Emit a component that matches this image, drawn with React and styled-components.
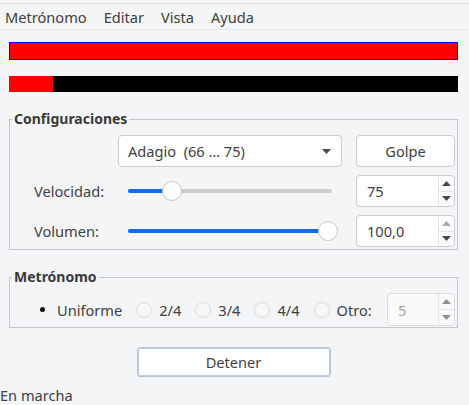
import React from "react";
import styled, { createGlobalStyle } from "styled-components";

const Global = createGlobalStyle`
  html, body { margin: 0; padding: 0; background: #f4f5f7; }
  body {
    font-family: "Noto Sans", "Open Sans", "DejaVu Sans", sans-serif;
    font-size: 14.6px;
    color: #3f3f3f;
  }
  * { box-sizing: border-box; }
`;

const Window = styled.div`
  width: 469px;
  height: 405px;
  overflow: hidden;
  display: flex;
  flex-direction: column;
  background: #f4f5f7;
`;

const MenuBar = styled.div`
  margin-top: 3px;
  height: 27px;
  border-top: 1px solid #dcdcdc;
  border-bottom: 1px solid #e9eaec;
  display: flex;
  align-items: center;
  gap: 17px;
  padding-left: 5px;
`;

const MenuItem = styled.span`
  line-height: 18px;
  color: #404040;
`;

const Content = styled.div`
  padding: 12px 11px 0 9px;
  display: flex;
  flex-direction: column;
`;

const TopBar = styled.div`
  height: 18px;
  background: #ff0000;
  border: 1px solid #0000ff;
`;

const LevelBar = styled.div`
  margin-top: 16px;
  height: 16px;
  background: #000;
  display: flex;
`;

const LevelFill = styled.div`
  background: #ff0000;
  height: 100%;
`;

const Group = styled.fieldset`
  margin: ${(p) => p.$top}px 0 0 0;
  padding: 0;
  border: 1px solid #c4c7cd;
  min-width: 0;
`;

const Legend = styled.legend`
  margin-left: 2px;
  padding: 0 2px;
  font-weight: bold;
  font-size: 14px;
  line-height: 18px;
  color: #3a3a3a;
`;

const ConfigGrid = styled.div`
  display: grid;
  grid-template-columns: 70px 224px 99px;
  column-gap: 14px;
  row-gap: 8px;
  padding: 7px 2px 2px 24px;
  align-items: center;
`;

const Label = styled.span`
  grid-column: 1;
  color: #404040;
  white-space: nowrap;
`;

const Combo = styled.div`
  grid-column: 2;
  height: 32px;
  background: #fff;
  border: 1px solid #c9ccd1;
  border-radius: 4px;
  display: flex;
  align-items: center;
  justify-content: space-between;
  padding: 0 10px 0 9px;
  white-space: pre;
  color: #3f3f3f;
`;

const PushButton = styled.div`
  height: 32px;
  background: #fff;
  border: 1px solid #c9ccd1;
  border-radius: 4px;
  display: flex;
  align-items: center;
  justify-content: center;
  color: #3f3f3f;
`;

const SliderBox = styled.div`
  position: relative;
  height: 32px;
`;

const Groove = styled.div`
  position: absolute;
  left: 10px;
  right: 10px;
  top: 14px;
  height: 4px;
  border-radius: 2px;
  background: #cdcdcd;
  overflow: hidden;
`;

const GrooveFill = styled.div`
  height: 100%;
  background: #0b6fdd;
`;

const Thumb = styled.div`
  position: absolute;
  top: 6px;
  width: 20px;
  height: 20px;
  border-radius: 50%;
  background: #fff;
  border: 1px solid #c8c8c8;
`;

const Spin = styled.div`
  height: ${(p) => p.$h || 32}px;
  width: ${(p) => (p.$w ? p.$w + "px" : "auto")};
  background: ${(p) => (p.$disabled ? "#fafafa" : "#fff")};
  border: 1px solid ${(p) => (p.$disabled ? "#dcdde0" : "#c9ccd1")};
  border-radius: 4px;
  display: flex;
  margin-left: ${(p) => (p.$push ? "auto" : "0")};
`;

const SpinText = styled.div`
  flex: 1;
  display: flex;
  align-items: center;
  padding-left: 10px;
  color: ${(p) => (p.$disabled ? "#a3a3a3" : "#3f3f3f")};
`;

const SpinButtons = styled.div`
  width: 16px;
  border-left: 1px solid #e4e5e8;
  display: flex;
  flex-direction: column;
`;

const SpinHalf = styled.div`
  flex: 1;
  display: flex;
  align-items: center;
  justify-content: center;
  & + & { border-top: 1px solid #e4e5e8; }
`;

const Arrow = ({ up, color }) => (
  <svg width="9" height="5" viewBox="0 0 9 5">
    <path d={up ? "M0 5 L4.5 0 L9 5 Z" : "M0 0 L9 0 L4.5 5 Z"} fill={color} />
  </svg>
);

const SpinBox = ({ value, upColor = "#4a4a4a", downColor = "#4a4a4a", disabled, w, h, push }) => (
  <Spin $disabled={disabled} $w={w} $h={h} $push={push}>
    <SpinText $disabled={disabled}>{value}</SpinText>
    <SpinButtons>
      <SpinHalf><Arrow up color={upColor} /></SpinHalf>
      <SpinHalf><Arrow color={downColor} /></SpinHalf>
    </SpinButtons>
  </Spin>
);

const Slider = ({ pos }) => (
  <SliderBox>
    <Groove>
      <GrooveFill style={{ width: pos }} />
    </Groove>
    <Thumb style={{ left: pos }} />
  </SliderBox>
);

const RadioRow = styled.div`
  display: flex;
  align-items: center;
  padding: 7px 2px 1px 24px;
  gap: 14px;
`;

const RadioItem = styled.div`
  display: flex;
  align-items: center;
  gap: 7px;
  color: #404040;
`;

const RadioSlot = styled.span`
  width: 16px;
  height: 16px;
  display: flex;
  align-items: center;
  justify-content: center;
  border-radius: 50%;
  border: 1px solid ${(p) => (p.$checked ? "transparent" : "#dcdde0")};
  background: ${(p) => (p.$checked ? "transparent" : "#f7f7f8")};
  &::after {
    content: "";
    display: ${(p) => (p.$checked ? "block" : "none")};
    width: 5px;
    height: 5px;
    border-radius: 50%;
    background: #111;
  }
`;

const Radio = ({ label, checked }) => (
  <RadioItem>
    <RadioSlot $checked={checked} />
    <span>{label}</span>
  </RadioItem>
);

const ButtonRow = styled.div`
  margin-top: 19px;
  display: flex;
  justify-content: center;
`;

const FocusButton = styled.div`
  width: 194px;
  height: 30px;
  background: #fff;
  border: 1px solid #b9c2cf;
  box-shadow: inset 0 0 0 1px #b3cff0;
  border-radius: 3px;
  display: flex;
  align-items: center;
  justify-content: center;
  color: #3f3f3f;
`;

const StatusBar = styled.div`
  margin-top: 8px;
  padding-left: 0;
  line-height: 20px;
  color: #404040;
`;

export default function App() {
  return (
    <>
      <Global />
      <Window>
        <MenuBar>
          <MenuItem>Metrónomo</MenuItem>
          <MenuItem>Editar</MenuItem>
          <MenuItem>Vista</MenuItem>
          <MenuItem>Ayuda</MenuItem>
        </MenuBar>
        <Content>
          <TopBar />
          <LevelBar>
            <LevelFill style={{ width: 44 }} />
          </LevelBar>
          <Group $top={18}>
            <Legend>Configuraciones</Legend>
            <ConfigGrid>
              <Combo>
                <span>Adagio  (66 … 75)</span>
                <Arrow color="#4a4a4a" />
              </Combo>
              <PushButton>Golpe</PushButton>
              <Label>Velocidad:</Label>
              <Slider pos={44} />
              <SpinBox value="75" />
              <Label>Volumen:</Label>
              <Slider pos={200} />
              <SpinBox value="100,0" upColor="#a8a8a8" />
            </ConfigGrid>
          </Group>
          <Group $top={18}>
            <Legend>Metrónomo</Legend>
            <RadioRow>
              <Radio label="Uniforme" checked />
              <Radio label="2/4" />
              <Radio label="3/4" />
              <Radio label="4/4" />
              <Radio label="Otro:" />
              <SpinBox value="5" disabled w={68} h={33} push upColor="#8f8f8f" downColor="#8f8f8f" />
            </RadioRow>
          </Group>
          <ButtonRow>
            <FocusButton>Detener</FocusButton>
          </ButtonRow>
        </Content>
        <StatusBar>En marcha</StatusBar>
      </Window>
    </>
  );
}
